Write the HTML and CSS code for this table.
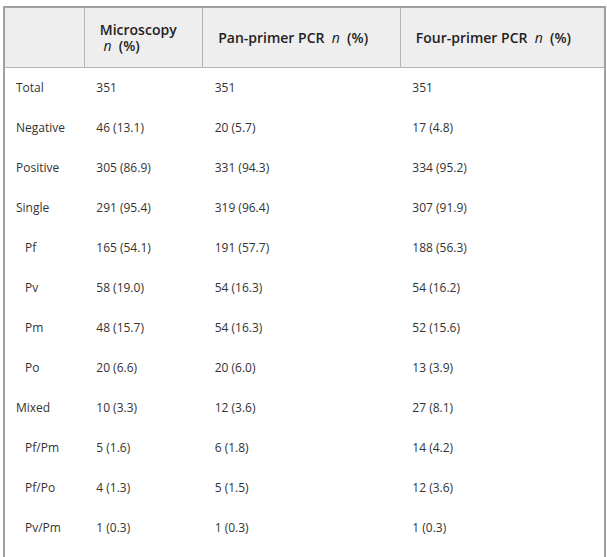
FILE: index.html
```html
<!DOCTYPE html>
<html>
<head>
<meta charset="utf-8">
<link rel="stylesheet" href="styles.css">
</head>
<body>
<table class="data">
  <colgroup>
    <col class="c1"><col class="c2"><col class="c3"><col class="c4">
  </colgroup>
  <thead>
    <tr>
      <th></th>
      <th>Microscopy<br>&nbsp;<i>n</i>&nbsp; (%)</th>
      <th>Pan-primer PCR &nbsp;<i>n</i>&nbsp; (%)</th>
      <th>Four-primer PCR &nbsp;<i>n</i>&nbsp; (%)</th>
    </tr>
  </thead>
  <tbody>
    <tr><td>Total</td><td>351</td><td>351</td><td>351</td></tr>
    <tr><td>Negative</td><td>46 (13.1)</td><td>20 (5.7)</td><td>17 (4.8)</td></tr>
    <tr><td>Positive</td><td>305 (86.9)</td><td>331 (94.3)</td><td>334 (95.2)</td></tr>
    <tr><td>Single</td><td>291 (95.4)</td><td>319 (96.4)</td><td>307 (91.9)</td></tr>
    <tr><td class="sub">Pf</td><td>165 (54.1)</td><td>191 (57.7)</td><td>188 (56.3)</td></tr>
    <tr><td class="sub">Pv</td><td>58 (19.0)</td><td>54 (16.3)</td><td>54 (16.2)</td></tr>
    <tr><td class="sub">Pm</td><td>48 (15.7)</td><td>54 (16.3)</td><td>52 (15.6)</td></tr>
    <tr><td class="sub">Po</td><td>20 (6.6)</td><td>20 (6.0)</td><td>13 (3.9)</td></tr>
    <tr><td>Mixed</td><td>10 (3.3)</td><td>12 (3.6)</td><td>27 (8.1)</td></tr>
    <tr><td class="sub">Pf/Pm</td><td>5 (1.6)</td><td>6 (1.8)</td><td>14 (4.2)</td></tr>
    <tr><td class="sub">Pf/Po</td><td>4 (1.3)</td><td>5 (1.5)</td><td>12 (3.6)</td></tr>
    <tr><td class="sub">Pv/Pm</td><td>1 (0.3)</td><td>1 (0.3)</td><td>1 (0.3)</td></tr>
    <tr><td>&nbsp;</td><td></td><td></td><td></td></tr>
  </tbody>
</table>
</body>
</html>
```

FILE: styles.css
```css
html, body {
  margin: 0;
  padding: 0;
  background: #fff;
}
body {
  padding: 6px 0 0 3px;
  font-family: "Open Sans", "Liberation Sans", sans-serif;
  color: #333;
}
.data {
  width: 603px;
  border-collapse: collapse;
  border: 2px solid #a0a0a0;
  border-bottom: none;
  table-layout: fixed;
}
.c1 { width: 80px; }
.c2 { width: 118px; }
.c3 { width: 197px; }
.c4 { width: 204px; }
.data th {
  background: #eeeeee;
  font-size: 14px;
  font-weight: 600;
  text-align: left;
  height: 59px;
  padding: 0 0 0 15px;
  line-height: 16px;
  border-left: 1px solid #b4b4b4;
  border-bottom: 1px solid #b4b4b4;
  color: #222;
}
.data th:first-child { border-left: none; }
.data th i {
  font-style: italic;
  font-weight: 400;
}
.data td {
  font-size: 12px;
  height: 40px;
  padding: 0 0 0 12px;
  vertical-align: middle;
  line-height: 16px;
}
.data td:first-child { padding-left: 11px; }
.data td.sub { padding-left: 20px; }
```
